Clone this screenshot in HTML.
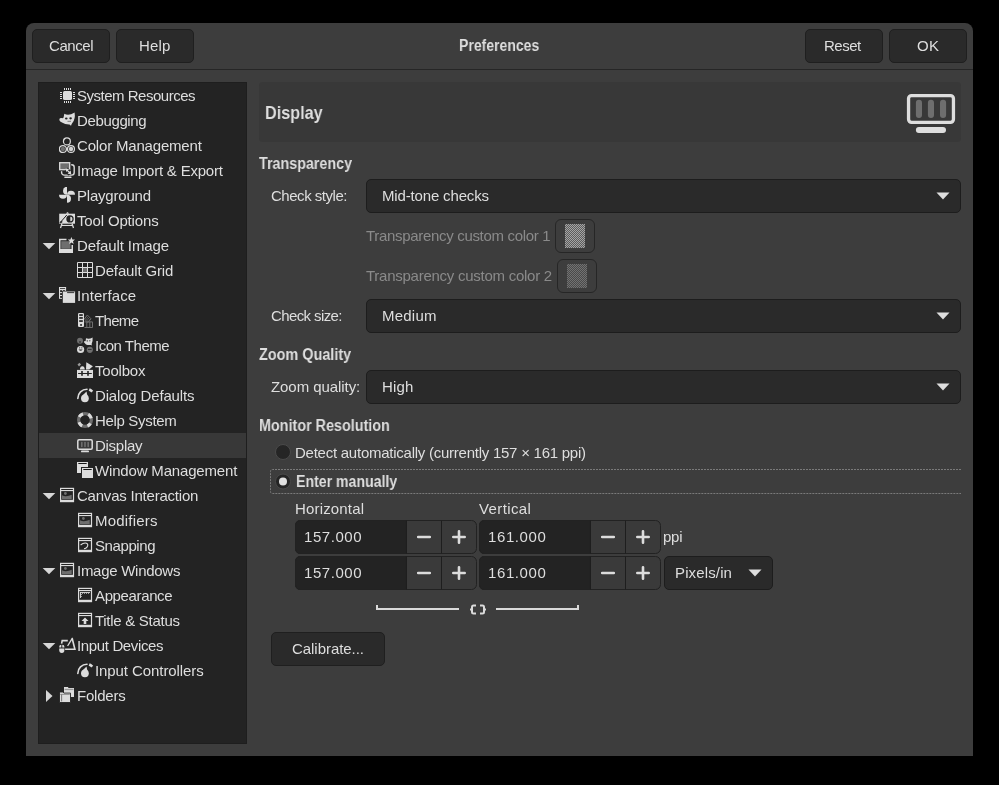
<!DOCTYPE html>
<html><head><meta charset="utf-8"><style>
html,body{margin:0;padding:0;width:999px;height:785px;overflow:hidden;background:#000;}
body{position:relative;font-family:"Liberation Sans",sans-serif;}
.t{position:absolute;white-space:nowrap;will-change:transform;}
</style></head><body>
<div style="position:absolute;left:26px;top:23px;width:947px;height:733px;background:#3d3d3d;border-radius:8px 8px 0 0;"></div>
<div style="position:absolute;left:26px;top:69px;width:947px;height:1px;background:#262626;"></div>
<div style="position:absolute;left:32px;top:29px;width:78px;height:34px;background:#2a2a2a;border:1px solid #1f1f1f;box-sizing:border-box;border-radius:5px;"></div>
<div class="t" style="left:48.50px;top:38.00px;font-size:15px;line-height:15px;letter-spacing:-0.440px;color:#dedede;">Cancel</div>
<div style="position:absolute;left:116px;top:29px;width:78px;height:34px;background:#2a2a2a;border:1px solid #1f1f1f;box-sizing:border-box;border-radius:5px;"></div>
<div class="t" style="left:139.00px;top:38.00px;font-size:15px;line-height:15px;letter-spacing:0.167px;color:#dedede;">Help</div>
<div style="position:absolute;left:805px;top:29px;width:78px;height:34px;background:#2a2a2a;border:1px solid #1f1f1f;box-sizing:border-box;border-radius:5px;"></div>
<div class="t" style="left:824.40px;top:38.00px;font-size:15px;line-height:15px;letter-spacing:-0.500px;color:#dedede;">Reset</div>
<div style="position:absolute;left:889px;top:29px;width:78px;height:34px;background:#2a2a2a;border:1px solid #1f1f1f;box-sizing:border-box;border-radius:5px;"></div>
<div class="t" style="left:916.80px;top:38.00px;font-size:15px;line-height:15px;letter-spacing:0.300px;color:#dedede;">OK</div>
<div class="t" style="left:458.70px;top:38.00px;font-size:16px;line-height:16px;letter-spacing:0.000px;color:#dedede;font-weight:bold;transform:scaleX(0.8750);transform-origin:0.00px 0;">Preferences</div>
<div style="position:absolute;left:38px;top:82px;width:209px;height:662px;background:#232323;border:1px solid #1e1e1e;box-sizing:border-box;"></div>
<div style="position:absolute;left:39px;top:433px;width:207px;height:25px;background:#383838;"></div>
<div class="t" style="left:77.20px;top:88.00px;font-size:15px;line-height:15px;letter-spacing:-0.487px;color:#dedede;">System Resources</div>
<svg style="position:absolute;left:59px;top:87px" width="17" height="17" viewBox="0 0 17 17"><rect x="4" y="4" width="9" height="9" rx="1.5" fill="#dcdcdc"/><rect x="5" y="1" width="1" height="2" fill="#dcdcdc"/><rect x="5" y="14" width="1" height="2" fill="#dcdcdc"/><rect x="7" y="1" width="1" height="2" fill="#dcdcdc"/><rect x="7" y="14" width="1" height="2" fill="#dcdcdc"/><rect x="9" y="1" width="1" height="2" fill="#dcdcdc"/><rect x="9" y="14" width="1" height="2" fill="#dcdcdc"/><rect x="11" y="1" width="1" height="2" fill="#dcdcdc"/><rect x="11" y="14" width="1" height="2" fill="#dcdcdc"/><rect x="1" y="5" width="2" height="1" fill="#dcdcdc"/><rect x="14" y="5" width="2" height="1" fill="#dcdcdc"/><rect x="1" y="7" width="2" height="1" fill="#dcdcdc"/><rect x="14" y="7" width="2" height="1" fill="#dcdcdc"/><rect x="1" y="9" width="2" height="1" fill="#dcdcdc"/><rect x="14" y="9" width="2" height="1" fill="#dcdcdc"/><rect x="1" y="11" width="2" height="1" fill="#dcdcdc"/><rect x="14" y="11" width="2" height="1" fill="#dcdcdc"/></svg>
<div class="t" style="left:77.20px;top:113.00px;font-size:15px;line-height:15px;letter-spacing:-0.363px;color:#dedede;">Debugging</div>
<svg style="position:absolute;left:59px;top:112px" width="17" height="17" viewBox="0 0 17 17"><path d="M0.3 8 Q0.3 5.5 2.5 6 Q3.8 6.5 4.6 5.5 L5.3 1.8 Q9.5 4.4 15.6 0.6 Q16.6 7 13.5 10.8 Q12.6 12 12 13.8 L10.5 12.5 Q6 12.6 3 10.6 Q0.8 9.8 0.3 8 Z" fill="#dcdcdc"/><ellipse cx="7.3" cy="6.5" rx="1.3" ry="1.1" fill="#232323"/><ellipse cx="11.6" cy="6.3" rx="1.3" ry="1.1" fill="#232323"/><path d="M8.5 9.3 L12 9.3" stroke="#6e6e6e" stroke-width="0.9"/></svg>
<div class="t" style="left:77.20px;top:138.00px;font-size:15px;line-height:15px;letter-spacing:-0.180px;color:#dedede;">Color Management</div>
<svg style="position:absolute;left:59px;top:137px" width="17" height="17" viewBox="0 0 17 17"><circle cx="7.9" cy="4.4" r="3.45" fill="none" stroke="#dcdcdc" stroke-width="1.2"/><circle cx="3.9" cy="12" r="3.45" fill="#232323" stroke="#dcdcdc" stroke-width="1.2"/><circle cx="3.9" cy="12" r="2.2" fill="#6e6e6e"/><circle cx="12" cy="12" r="3.45" fill="#232323" stroke="#dcdcdc" stroke-width="1.2"/><circle cx="12" cy="12" r="2.2" fill="#d0d0d0"/><rect x="7.4" y="10.5" width="1" height="3" fill="#dcdcdc"/></svg>
<div class="t" style="left:77.20px;top:163.00px;font-size:15px;line-height:15px;letter-spacing:-0.205px;color:#dedede;">Image Import &amp; Export</div>
<svg style="position:absolute;left:59px;top:162px" width="17" height="17" viewBox="0 0 17 17"><rect x="2.6" y="2.7" width="12.6" height="10.4" rx="2.6" fill="#232323" stroke="#dcdcdc" stroke-width="1.4"/><rect x="0.7" y="0.7" width="10" height="7" fill="#6e6e6e" stroke="#232323" stroke-width="3"/><rect x="0.7" y="0.7" width="10" height="7" fill="#6e6e6e" stroke="#dcdcdc" stroke-width="1.3"/><path d="M5.5 9.5 L8.5 5.5 L13.5 10.5 L9.5 13.5Z" fill="#232323"/><rect x="5.2" y="14.6" width="7.4" height="1.4" rx=".7" fill="#dcdcdc"/><path d="M7.5 7.6 L10.8 10.8" stroke="#dcdcdc" stroke-width="1.3"/><path d="M6.6 6.4 L10.2 6.9 L7.1 10 Z M12.2 12.2 L8.6 11.7 L11.7 8.6 Z" fill="#dcdcdc"/></svg>
<div class="t" style="left:77.20px;top:188.00px;font-size:15px;line-height:15px;letter-spacing:-0.211px;color:#dedede;">Playground</div>
<svg style="position:absolute;left:59px;top:187px" width="17" height="17" viewBox="0 0 17 17"><g fill="#dcdcdc"><path d="M8 -0.2 A4 4 0 0 0 8 7.8Z"/><path d="M8 7.8 H16 A4 4 0 0 0 8 7.8Z"/><path d="M8 7.8 V15.8 A4 4 0 0 0 8 7.8Z"/><path d="M8 7.8 H0 A4 4 0 0 0 8 7.8Z"/></g></svg>
<div class="t" style="left:77.20px;top:213.00px;font-size:15px;line-height:15px;letter-spacing:-0.155px;color:#dedede;">Tool Options</div>
<svg style="position:absolute;left:59px;top:212px" width="17" height="17" viewBox="0 0 17 17"><rect x="0.2" y="1.7" width="15.8" height="10" fill="#dcdcdc"/><path d="M7 1.8 L8 0.2 H9 L10 1.8Z" fill="#dcdcdc"/><path d="M1.3 10.5 L7.8 3" stroke="#232323" stroke-width="1"/><path d="M1 10.8 Q1.5 9 3 9.2 L2.8 10.6Z" fill="#232323" stroke="#232323" stroke-width="0.8"/><circle cx="11" cy="6.9" r="3.7" fill="#232323"/><path d="M11.3 4.8 A2.2 2.2 0 0 1 11.3 9.2Z" fill="#dcdcdc"/><path d="M1.5 16 L3 11.5 M14.5 16 L13 11.5" stroke="#dcdcdc" stroke-width="1.3"/><rect x="2" y="12.9" width="12" height="1.1" fill="#dcdcdc"/></svg>
<div class="t" style="left:77.20px;top:238.00px;font-size:15px;line-height:15px;letter-spacing:-0.108px;color:#dedede;">Default Image</div>
<svg style="position:absolute;left:59px;top:237px" width="17" height="17" viewBox="0 0 17 17"><path d="M7.5 2.5 H0.75 V15.25 H13.25 V8" fill="none" stroke="#dcdcdc" stroke-width="1.5"/><rect x="2.2" y="4.2" width="9.3" height="7.6" fill="#6e6e6e"/><rect x="0" y="12" width="14" height="4" fill="#dcdcdc"/><path d="M12.4 0 L13.4 2.4 L16 2.6 L14 4.3 L14.6 6.9 L12.4 5.5 L10.2 6.9 L10.8 4.3 L8.8 2.6 L11.4 2.4Z" fill="#dcdcdc"/></svg>
<svg style="position:absolute;left:42px;top:242px" width="14" height="8"><path d="M0.7 1 L13.3 1 L7 7.2 Z" fill="#d6d6d6"/></svg>
<div class="t" style="left:95.20px;top:263.00px;font-size:15px;line-height:15px;letter-spacing:-0.155px;color:#dedede;">Default Grid</div>
<svg style="position:absolute;left:77px;top:262px" width="17" height="17" viewBox="0 0 17 17"><path d="M0.5 0.5 H15.5 V15.5 H0.5Z M5.5 0.5 V15.5 M10.5 0.5 V15.5 M0.5 5.5 H15.5 M0.5 10.5 H15.5" fill="none" stroke="#dcdcdc" stroke-width="1"/><rect x="6" y="6" width="4" height="4" fill="#6e6e6e"/></svg>
<div class="t" style="left:77.20px;top:288.00px;font-size:15px;line-height:15px;letter-spacing:0.087px;color:#dedede;">Interface</div>
<svg style="position:absolute;left:59px;top:287px" width="17" height="17" viewBox="0 0 17 17"><rect x="0" y="0" width="7.1" height="11.8" fill="#dcdcdc"/><rect x="1" y="1" width="5.1" height="0.8" fill="#232323"/><rect x="1.1" y="3.2" width="1.9" height="1.9" fill="#232323"/><rect x="1.1" y="6.1" width="1.9" height="1.9" fill="#232323"/><rect x="1.1" y="9" width="1.9" height="1.9" fill="#232323"/><rect x="4" y="3.2" width="1.9" height="1.9" fill="#232323"/><rect x="4" y="6.1" width="1.9" height="1.9" fill="#232323"/><rect x="4" y="9" width="1.9" height="1.9" fill="#232323"/><rect x="3" y="3.8" width="13.1" height="12.1" fill="#232323"/><rect x="3.8" y="4.5" width="12.3" height="11.4" fill="#dcdcdc"/><rect x="8.1" y="5.2" width="7.1" height="0.9" fill="#232323"/></svg>
<svg style="position:absolute;left:42px;top:292px" width="14" height="8"><path d="M0.7 1 L13.3 1 L7 7.2 Z" fill="#d6d6d6"/></svg>
<div class="t" style="left:95.20px;top:313.00px;font-size:15px;line-height:15px;letter-spacing:-0.675px;color:#dedede;">Theme</div>
<svg style="position:absolute;left:77px;top:312px" width="17" height="17" viewBox="0 0 17 17"><rect x="1" y="1" width="6" height="14" rx="1.2" fill="#dcdcdc"/><rect x="2.2" y="2.2" width="3.6" height="1.7" fill="#232323"/><rect x="2.2" y="5.1" width="3.6" height="1.7" fill="#232323"/><rect x="2.2" y="8.2" width="3.6" height="1.7" fill="#232323"/><rect x="3.2" y="12.1" width="1.7" height="1.7" fill="#232323"/><path d="M7.4 7 L10.3 3 L14 6.8 L11 10.5Z" fill="#232323" stroke="#6e6e6e" stroke-width="1"/><path d="M8.6 6.2 L11.6 9 M9.6 4.9 L12.6 7.7" stroke="#6e6e6e" stroke-width="0.8"/><path d="M7.5 15.5 H15.5 V9.9 H7.5 M9.8 9.9 V15.5 M12.8 9.9 V15.5" fill="none" stroke="#6e6e6e" stroke-width="1"/></svg>
<div class="t" style="left:95.20px;top:338.00px;font-size:15px;line-height:15px;letter-spacing:-0.478px;color:#dedede;">Icon Theme</div>
<svg style="position:absolute;left:77px;top:337px" width="17" height="17" viewBox="0 0 17 17"><circle cx="3" cy="3.8" r="3" fill="#6e6e6e"/><rect x="2" y="4.5" width="2" height="1" fill="#232323"/><circle cx="3.6" cy="12.5" r="3.6" fill="#dcdcdc"/><path d="M1.5 12.6 Q3.6 15 5.7 12.6Z" fill="#232323"/><rect x="2" y="10.5" width="1.2" height=".8" fill="#232323"/><rect x="4.2" y="10.5" width="1.2" height=".8" fill="#232323"/><circle cx="12.8" cy="12.8" r="3.1" fill="#6e6e6e"/><rect x="11" y="12" width="3.6" height=".8" fill="#232323"/><path d="M6.8 5 Q7.6 3.5 8.6 4.2 L9 1.2 Q12 2.5 15.6 0.4 Q16 5 14.6 7 L15 8.6 L13.8 8 Q11 8.4 9 7.4Z" fill="#dcdcdc"/><circle cx="10.3" cy="3.9" r=".8" fill="#6e6e6e"/><circle cx="12.8" cy="3.8" r=".8" fill="#6e6e6e"/></svg>
<div class="t" style="left:95.20px;top:363.00px;font-size:15px;line-height:15px;letter-spacing:-0.217px;color:#dedede;">Toolbox</div>
<svg style="position:absolute;left:77px;top:362px" width="17" height="17" viewBox="0 0 17 17"><rect x="0" y="7.9" width="16" height="8.1" fill="#dcdcdc"/><rect x="1.1" y="11" width="13.7" height="1" fill="#232323"/><rect x="4.2" y="9" width="1.6" height="4.8" fill="#232323"/><rect x="10.2" y="9" width="1.6" height="4.8" fill="#232323"/><path d="M0.5 2.5 L2.5 0.8 L4 2.4 L2 4.6Z" fill="#9a9a9a"/><path d="M3 6.5 Q3.5 4 5.5 4.2 Q7.8 4.4 7.7 7.6 H3Z" fill="#dcdcdc"/><path d="M9 7.6 L9.3 0.2 L15.9 4.2 L12.2 7.6Z" fill="#dcdcdc"/></svg>
<div class="t" style="left:95.20px;top:388.00px;font-size:15px;line-height:15px;letter-spacing:-0.164px;color:#dedede;">Dialog Defaults</div>
<svg style="position:absolute;left:77px;top:387px" width="17" height="17" viewBox="0 0 17 17"><path d="M0.8 11.4 A9.2 9.2 0 0 1 10 2.2" fill="none" stroke="#dcdcdc" stroke-width="1.6" stroke-linecap="round"/><path d="M12.2 2.5 A9.2 9.2 0 0 1 15.3 4.6" fill="none" stroke="#dcdcdc" stroke-width="2.6"/><circle cx="7.9" cy="11.3" r="3.9" fill="#dcdcdc"/><path d="M5.5 8.5 L9.5 4.6 L10.5 9Z" fill="#dcdcdc"/></svg>
<div class="t" style="left:95.20px;top:413.00px;font-size:15px;line-height:15px;letter-spacing:-0.330px;color:#dedede;">Help System</div>
<svg style="position:absolute;left:77px;top:412px" width="17" height="17" viewBox="0 0 17 17"><circle cx="8" cy="8" r="6.4" fill="none" stroke="#6e6e6e" stroke-width="3.2"/><circle cx="8" cy="8" r="6.4" fill="none" stroke="#dcdcdc" stroke-width="3.2" stroke-dasharray="5.03 5.03" stroke-dashoffset="2.51" transform="rotate(45 8 8)"/></svg>
<div class="t" style="left:95.20px;top:438.00px;font-size:15px;line-height:15px;letter-spacing:-0.283px;color:#dedede;">Display</div>
<svg style="position:absolute;left:77px;top:437px" width="17" height="17" viewBox="0 0 17 17"><rect x="0.8" y="2.8" width="14.4" height="9.4" rx="1.2" fill="none" stroke="#dcdcdc" stroke-width="1.5"/><rect x="4" y="4.8" width="1.6" height="5.4" rx=".8" fill="#6e6e6e"/><rect x="7.2" y="4.8" width="1.6" height="5.4" rx=".8" fill="#6e6e6e"/><rect x="10.4" y="4.8" width="1.6" height="5.4" rx=".8" fill="#6e6e6e"/><rect x="4" y="13.5" width="8" height="1.8" rx=".9" fill="#dcdcdc"/></svg>
<div class="t" style="left:95.20px;top:463.00px;font-size:15px;line-height:15px;letter-spacing:-0.169px;color:#dedede;">Window Management</div>
<svg style="position:absolute;left:77px;top:462px" width="17" height="17" viewBox="0 0 17 17"><rect x="0" y="0" width="11" height="11" fill="#dcdcdc"/><rect x="1.2" y="1" width="8.6" height="1.1" rx=".5" fill="#181818"/><rect x="4" y="5" width="13" height="12" fill="#232323"/><rect x="5" y="6" width="11" height="10" fill="#dcdcdc"/><rect x="6.2" y="7" width="8.6" height="1.1" rx=".5" fill="#181818"/></svg>
<div class="t" style="left:77.20px;top:488.00px;font-size:15px;line-height:15px;letter-spacing:-0.218px;color:#dedede;">Canvas Interaction</div>
<svg style="position:absolute;left:59px;top:487px" width="17" height="17" viewBox="0 0 17 17"><rect x="1.6" y="1.4" width="12.9" height="13.2" fill="#232323" stroke="#dcdcdc" stroke-width="1.2"/><rect x="1" y="3" width="14" height="1.1" fill="#dcdcdc"/><rect x="1" y="12.8" width="14" height="2.2" fill="#dcdcdc"/><circle cx="6.4" cy="6.5" r="1.4" fill="#6e6e6e"/><path d="M3 12.1 V8.2 Q5 9.4 7 9.3 Q10 9 12.7 7.8 V12.1Z" fill="#6e6e6e"/></svg>
<svg style="position:absolute;left:42px;top:492px" width="14" height="8"><path d="M0.7 1 L13.3 1 L7 7.2 Z" fill="#d6d6d6"/></svg>
<div class="t" style="left:95.20px;top:513.00px;font-size:15px;line-height:15px;letter-spacing:0.212px;color:#dedede;">Modifiers</div>
<svg style="position:absolute;left:77px;top:512px" width="17" height="17" viewBox="0 0 17 17"><rect x="1.6" y="1.4" width="12.9" height="13.2" fill="#232323" stroke="#dcdcdc" stroke-width="1.2"/><rect x="1" y="3" width="14" height="1.1" fill="#dcdcdc"/><rect x="1" y="12.8" width="14" height="2.2" fill="#dcdcdc"/><circle cx="6.4" cy="6.5" r="1.4" fill="#6e6e6e"/><path d="M3 12.1 V8.2 Q5 9.4 7 9.3 Q10 9 12.7 7.8 V12.1Z" fill="#6e6e6e"/></svg>
<div class="t" style="left:95.20px;top:538.00px;font-size:15px;line-height:15px;letter-spacing:-0.414px;color:#dedede;">Snapping</div>
<svg style="position:absolute;left:77px;top:537px" width="17" height="17" viewBox="0 0 17 17"><rect x="1.6" y="1.4" width="12.9" height="13.2" fill="#232323" stroke="#dcdcdc" stroke-width="1.2"/><rect x="1" y="3" width="14" height="1.1" fill="#dcdcdc"/><rect x="1" y="12.8" width="14" height="2.2" fill="#dcdcdc"/><path d="M3.6 8 Q6.5 5.5 9.5 6.2 Q11.8 7.2 10 10.2 Q9 11.5 7 11.8" fill="none" stroke="#dcdcdc" stroke-width="1.1"/></svg>
<div class="t" style="left:77.20px;top:563.00px;font-size:15px;line-height:15px;letter-spacing:-0.275px;color:#dedede;">Image Windows</div>
<svg style="position:absolute;left:59px;top:562px" width="17" height="17" viewBox="0 0 17 17"><rect x="1.6" y="1.4" width="12.9" height="13.2" fill="#232323" stroke="#dcdcdc" stroke-width="1.2"/><rect x="1" y="3" width="14" height="1.1" fill="#dcdcdc"/><rect x="1" y="12.8" width="14" height="2.2" fill="#dcdcdc"/><circle cx="6.4" cy="6.5" r="1.4" fill="#6e6e6e"/><path d="M3 12.1 V8.2 Q5 9.4 7 9.3 Q10 9 12.7 7.8 V12.1Z" fill="#6e6e6e"/></svg>
<svg style="position:absolute;left:42px;top:567px" width="14" height="8"><path d="M0.7 1 L13.3 1 L7 7.2 Z" fill="#d6d6d6"/></svg>
<div class="t" style="left:95.20px;top:588.00px;font-size:15px;line-height:15px;letter-spacing:-0.367px;color:#dedede;">Appearance</div>
<svg style="position:absolute;left:77px;top:587px" width="17" height="17" viewBox="0 0 17 17"><rect x="1.6" y="1.4" width="12.9" height="13.2" fill="#232323" stroke="#dcdcdc" stroke-width="1.2"/><rect x="1" y="3" width="14" height="1.1" fill="#dcdcdc"/><rect x="1" y="12.8" width="14" height="2.2" fill="#dcdcdc"/><rect x="3" y="5" width="10" height="0.9" fill="#dcdcdc"/><rect x="3" y="5" width="0.9" height="6" fill="#dcdcdc"/><rect x="5" y="5.8" width=".8" height="1" fill="#dcdcdc"/><rect x="7" y="5.8" width=".8" height="1" fill="#dcdcdc"/><rect x="9" y="5.8" width=".8" height="1" fill="#dcdcdc"/><rect x="11" y="5.8" width=".8" height="1" fill="#dcdcdc"/><rect x="3.8" y="7" width="1" height=".8" fill="#dcdcdc"/><rect x="3.8" y="9" width="1" height=".8" fill="#dcdcdc"/></svg>
<div class="t" style="left:95.20px;top:613.00px;font-size:15px;line-height:15px;letter-spacing:-0.285px;color:#dedede;">Title &amp; Status</div>
<svg style="position:absolute;left:77px;top:612px" width="17" height="17" viewBox="0 0 17 17"><rect x="1.6" y="1.4" width="12.9" height="13.2" fill="#232323" stroke="#dcdcdc" stroke-width="1.2"/><rect x="1" y="3" width="14" height="1.1" fill="#dcdcdc"/><rect x="1" y="12.8" width="14" height="2.2" fill="#dcdcdc"/><path d="M8 5.5 L11.5 9 H9.3 V12 H6.7 V9 H4.5Z" fill="#dcdcdc"/></svg>
<div class="t" style="left:77.20px;top:638.00px;font-size:15px;line-height:15px;letter-spacing:-0.358px;color:#dedede;">Input Devices</div>
<svg style="position:absolute;left:59px;top:637px" width="17" height="17" viewBox="0 0 17 17"><path d="M0.2 11.5 H5.4 V13 Q5.4 16 2.8 16 Q0.2 16 0.2 13Z" fill="#dcdcdc"/><path d="M0.2 10.6 V9.8 Q0.2 7.8 2.3 7.8 V10.6Z M3.3 10.6 V7.8 Q5.4 7.8 5.4 9.8 V10.6Z" fill="#dcdcdc"/><path d="M2.6 6.6 L3.2 3.6 H8.8" fill="none" stroke="#dcdcdc" stroke-width="1.6"/><path d="M6.1 12.2 H15.9 L13.2 1.5" fill="none" stroke="#dcdcdc" stroke-width="1.6"/><path d="M8.6 9 L13.6 0.8" stroke="#dcdcdc" stroke-width="1.3"/></svg>
<svg style="position:absolute;left:42px;top:642px" width="14" height="8"><path d="M0.7 1 L13.3 1 L7 7.2 Z" fill="#d6d6d6"/></svg>
<div class="t" style="left:95.20px;top:663.00px;font-size:15px;line-height:15px;letter-spacing:-0.081px;color:#dedede;">Input Controllers</div>
<svg style="position:absolute;left:77px;top:662px" width="17" height="17" viewBox="0 0 17 17"><path d="M0.8 11.4 A9.2 9.2 0 0 1 10 2.2" fill="none" stroke="#dcdcdc" stroke-width="1.6" stroke-linecap="round"/><path d="M12.2 2.5 A9.2 9.2 0 0 1 15.3 4.6" fill="none" stroke="#dcdcdc" stroke-width="2.6"/><circle cx="7.9" cy="11.3" r="3.9" fill="#dcdcdc"/><path d="M5.5 8.5 L9.5 4.6 L10.5 9Z" fill="#dcdcdc"/></svg>
<div class="t" style="left:77.20px;top:688.00px;font-size:15px;line-height:15px;letter-spacing:-0.217px;color:#dedede;">Folders</div>
<svg style="position:absolute;left:59px;top:687px" width="17" height="17" viewBox="0 0 17 17"><path d="M5 0 H8.9 L9.6 0.9 H15 V10 H5Z" fill="#dcdcdc"/><rect x="5.6" y="1.8" width="8.9" height="1.3" fill="#9a9a9a"/><path d="M0.5 5 H4.2 L4.9 6.1 H11.5 V15.5 H0.5Z" fill="#dcdcdc" stroke="#232323" stroke-width="0.9"/><rect x="1.2" y="6.9" width="9.6" height="1.1" fill="#9a9a9a"/><rect x="2.2" y="7.4" width="0.9" height="7" fill="#6e6e6e"/></svg>
<svg style="position:absolute;left:45px;top:689px" width="8" height="14"><path d="M1 1 L7.5 7 L1 13 Z" fill="#d6d6d6"/></svg>
<div style="position:absolute;left:259px;top:82px;width:702px;height:60px;background:#383838;border-radius:4px;"></div>
<div class="t" style="left:264.90px;top:102.50px;font-size:19px;line-height:19px;letter-spacing:0.000px;color:#dedede;font-weight:bold;transform:scaleX(0.8529);transform-origin:0.00px 0;">Display</div>
<svg style="position:absolute;left:906px;top:93px" width="50" height="42"><rect x="2.55" y="2.55" width="44.9" height="26.8" rx="3" fill="none" stroke="#dedede" stroke-width="3.3"/><rect x="9.9" y="6.8" width="6.1" height="18.2" rx="3" fill="#6e6e6e"/><rect x="21.9" y="6.8" width="6.1" height="18.2" rx="3" fill="#6e6e6e"/><rect x="34" y="6.8" width="6.1" height="18.2" rx="3" fill="#6e6e6e"/><rect x="9.9" y="33.9" width="30.1" height="6.1" rx="3" fill="#dedede"/></svg>
<div class="t" style="left:258.80px;top:156.00px;font-size:16px;line-height:16px;letter-spacing:0.000px;color:#dedede;font-weight:bold;transform:scaleX(0.8942);transform-origin:0.00px 0;">Transparency</div>
<div class="t" style="left:270.90px;top:188.00px;font-size:15px;line-height:15px;letter-spacing:-0.473px;color:#dedede;">Check style:</div>
<div style="position:absolute;left:366px;top:179px;width:595px;height:34px;background:#2a2a2a;border:1px solid #1d1d1d;box-sizing:border-box;border-radius:5px;"></div>
<div class="t" style="left:381.90px;top:188.00px;font-size:15px;line-height:15px;letter-spacing:-0.157px;color:#dedede;">Mid-tone checks</div>
<svg style="position:absolute;left:936px;top:192px" width="14" height="8"><path d="M0.5 0.5 L13.5 0.5 L7 7.5 Z" fill="#dedede"/></svg>
<div class="t" style="left:366.00px;top:227.70px;font-size:15px;line-height:15px;letter-spacing:-0.315px;color:#8a8a8a;">Transparency custom color 1</div>
<div class="t" style="left:366.00px;top:267.70px;font-size:15px;line-height:15px;letter-spacing:-0.258px;color:#8a8a8a;">Transparency custom color 2</div>
<div style="position:absolute;left:555px;top:219px;width:40px;height:34px;border:1.5px solid #262626;box-sizing:border-box;border-radius:6px;"></div>
<div style="position:absolute;left:565px;top:224px;width:20px;height:24px;background:repeating-conic-gradient(#a4a4a4 0 25%,#5c5c5c 0 50%) 0 0/2px 2px;"></div>
<div style="position:absolute;left:557px;top:259px;width:40px;height:34px;border:1.5px solid #262626;box-sizing:border-box;border-radius:6px;"></div>
<div style="position:absolute;left:567px;top:264px;width:20px;height:24px;background:repeating-conic-gradient(#727272 0 25%,#4a4a4a 0 50%) 0 0/2px 2px;"></div>
<div class="t" style="left:270.60px;top:308.00px;font-size:15px;line-height:15px;letter-spacing:-0.600px;color:#dedede;">Check size:</div>
<div style="position:absolute;left:366px;top:299px;width:595px;height:34px;background:#2a2a2a;border:1px solid #1d1d1d;box-sizing:border-box;border-radius:5px;"></div>
<div class="t" style="left:381.70px;top:308.00px;font-size:15px;line-height:15px;letter-spacing:0.220px;color:#dedede;">Medium</div>
<svg style="position:absolute;left:936px;top:312px" width="14" height="8"><path d="M0.5 0.5 L13.5 0.5 L7 7.5 Z" fill="#dedede"/></svg>
<div class="t" style="left:258.80px;top:347.00px;font-size:16px;line-height:16px;letter-spacing:0.000px;color:#dedede;font-weight:bold;transform:scaleX(0.9020);transform-origin:0.00px 0;">Zoom Quality</div>
<div class="t" style="left:270.60px;top:379.00px;font-size:15px;line-height:15px;letter-spacing:-0.067px;color:#dedede;">Zoom quality:</div>
<div style="position:absolute;left:366px;top:370px;width:595px;height:34px;background:#2a2a2a;border:1px solid #1d1d1d;box-sizing:border-box;border-radius:5px;"></div>
<div class="t" style="left:381.70px;top:379.00px;font-size:15px;line-height:15px;letter-spacing:0.133px;color:#dedede;">High</div>
<svg style="position:absolute;left:936px;top:383px" width="14" height="8"><path d="M0.5 0.5 L13.5 0.5 L7 7.5 Z" fill="#dedede"/></svg>
<div class="t" style="left:258.70px;top:418.00px;font-size:16px;line-height:16px;letter-spacing:0.000px;color:#dedede;font-weight:bold;transform:scaleX(0.8973);transform-origin:0.00px 0;">Monitor Resolution</div>
<svg style="position:absolute;left:265px;top:440px" width="700" height="60"><circle cx="18" cy="12" r="7.5" fill="#252525" stroke="#4a4a4a" stroke-width="1"/><circle cx="18" cy="41.5" r="7.5" fill="#252525" stroke="#4a4a4a" stroke-width="1"/><circle cx="18" cy="41.5" r="4" fill="#e0e0e0"/><path d="M696 29.5 H7.5 Q5.5 29.5 5.5 31.5 V51.5 Q5.5 53.5 7.5 53.5 H696" fill="none" stroke="#7a7a7a" stroke-width="1" stroke-dasharray="2 1"/></svg>
<div class="t" style="left:294.80px;top:445.00px;font-size:15px;line-height:15px;letter-spacing:-0.249px;color:#dedede;">Detect automatically (currently 157 × 161 ppi)</div>
<div class="t" style="left:295.60px;top:474.00px;font-size:16px;line-height:16px;letter-spacing:0.000px;color:#dedede;font-weight:bold;transform:scaleX(0.8826);transform-origin:0.00px 0;">Enter manually</div>
<div class="t" style="left:295.40px;top:501.00px;font-size:15px;line-height:15px;letter-spacing:0.167px;color:#dedede;">Horizontal</div>
<div class="t" style="left:479.40px;top:501.00px;font-size:15px;line-height:15px;letter-spacing:0.386px;color:#dedede;">Vertical</div>
<svg style="position:absolute;left:295px;top:520px" width="182" height="34"><rect x="0.5" y="0.5" width="181" height="33" rx="5" fill="#3a3a3a" stroke="#222" stroke-width="1"/><path d="M5.5 0.5 H111 V33.5 H5.5 Q0.5 33.5 0.5 28.5 V5.5 Q0.5 0.5 5.5 0.5Z" fill="#232323" stroke="#222" stroke-width="1"/><rect x="111" y="0.5" width="1" height="33" fill="#1e1e1e"/><rect x="146" y="0.5" width="1" height="33" fill="#1e1e1e"/><path d="M123.2 17 H134.8 M158.3 17 H169.7 M164 11.3 V22.7" stroke="#dcdcdc" stroke-width="2.6" stroke-linecap="round"/></svg>
<div class="t" style="left:303.90px;top:529.00px;font-size:15px;line-height:15px;letter-spacing:0.567px;color:#dedede;">157.000</div>
<svg style="position:absolute;left:479px;top:520px" width="182" height="34"><rect x="0.5" y="0.5" width="181" height="33" rx="5" fill="#3a3a3a" stroke="#222" stroke-width="1"/><path d="M5.5 0.5 H111 V33.5 H5.5 Q0.5 33.5 0.5 28.5 V5.5 Q0.5 0.5 5.5 0.5Z" fill="#232323" stroke="#222" stroke-width="1"/><rect x="111" y="0.5" width="1" height="33" fill="#1e1e1e"/><rect x="146" y="0.5" width="1" height="33" fill="#1e1e1e"/><path d="M123.2 17 H134.8 M158.3 17 H169.7 M164 11.3 V22.7" stroke="#dcdcdc" stroke-width="2.6" stroke-linecap="round"/></svg>
<div class="t" style="left:487.80px;top:529.00px;font-size:15px;line-height:15px;letter-spacing:0.600px;color:#dedede;">161.000</div>
<svg style="position:absolute;left:295px;top:556px" width="182" height="34"><rect x="0.5" y="0.5" width="181" height="33" rx="5" fill="#3a3a3a" stroke="#222" stroke-width="1"/><path d="M5.5 0.5 H111 V33.5 H5.5 Q0.5 33.5 0.5 28.5 V5.5 Q0.5 0.5 5.5 0.5Z" fill="#232323" stroke="#222" stroke-width="1"/><rect x="111" y="0.5" width="1" height="33" fill="#1e1e1e"/><rect x="146" y="0.5" width="1" height="33" fill="#1e1e1e"/><path d="M123.2 17 H134.8 M158.3 17 H169.7 M164 11.3 V22.7" stroke="#dcdcdc" stroke-width="2.6" stroke-linecap="round"/></svg>
<div class="t" style="left:303.90px;top:565.00px;font-size:15px;line-height:15px;letter-spacing:0.567px;color:#dedede;">157.000</div>
<svg style="position:absolute;left:479px;top:556px" width="182" height="34"><rect x="0.5" y="0.5" width="181" height="33" rx="5" fill="#3a3a3a" stroke="#222" stroke-width="1"/><path d="M5.5 0.5 H111 V33.5 H5.5 Q0.5 33.5 0.5 28.5 V5.5 Q0.5 0.5 5.5 0.5Z" fill="#232323" stroke="#222" stroke-width="1"/><rect x="111" y="0.5" width="1" height="33" fill="#1e1e1e"/><rect x="146" y="0.5" width="1" height="33" fill="#1e1e1e"/><path d="M123.2 17 H134.8 M158.3 17 H169.7 M164 11.3 V22.7" stroke="#dcdcdc" stroke-width="2.6" stroke-linecap="round"/></svg>
<div class="t" style="left:487.80px;top:565.00px;font-size:15px;line-height:15px;letter-spacing:0.600px;color:#dedede;">161.000</div>
<div class="t" style="left:662.80px;top:529.00px;font-size:15px;line-height:15px;letter-spacing:-0.250px;color:#dedede;">ppi</div>
<div style="position:absolute;left:664px;top:556px;width:109px;height:34px;background:#2a2a2a;border:1px solid #1d1d1d;box-sizing:border-box;border-radius:5px;"></div>
<div class="t" style="left:675.00px;top:565.00px;font-size:15px;line-height:15px;letter-spacing:0.137px;color:#dedede;">Pixels/in</div>
<svg style="position:absolute;left:748px;top:569px" width="14" height="8"><path d="M0.5 0.5 L13.5 0.5 L7 7.5 Z" fill="#dedede"/></svg>
<div style="position:absolute;left:376px;top:608px;width:83px;height:2px;background:#dadada;"></div>
<div style="position:absolute;left:376px;top:605px;width:2px;height:5px;background:#dadada;"></div>
<div style="position:absolute;left:496px;top:608px;width:83px;height:2px;background:#dadada;"></div>
<div style="position:absolute;left:577px;top:605px;width:2px;height:5px;background:#dadada;"></div>
<svg style="position:absolute;left:469px;top:603px" width="18" height="13"><path d="M7 2.5 H4.5 Q3 2.5 3 4 V9 Q3 10.5 4.5 10.5 H7 M1 6.5 H4 M11 2.5 H13.5 Q15 2.5 15 4 V9 Q15 10.5 13.5 10.5 H11 M14 6.5 H17" stroke="#dadada" stroke-width="2" fill="none"/></svg>
<div style="position:absolute;left:271px;top:632px;width:114px;height:34px;background:#2a2a2a;border:1px solid #1f1f1f;box-sizing:border-box;border-radius:5px;"></div>
<div class="t" style="left:292.40px;top:641.00px;font-size:15px;line-height:15px;letter-spacing:-0.045px;color:#dedede;">Calibrate...</div>
</body></html>
